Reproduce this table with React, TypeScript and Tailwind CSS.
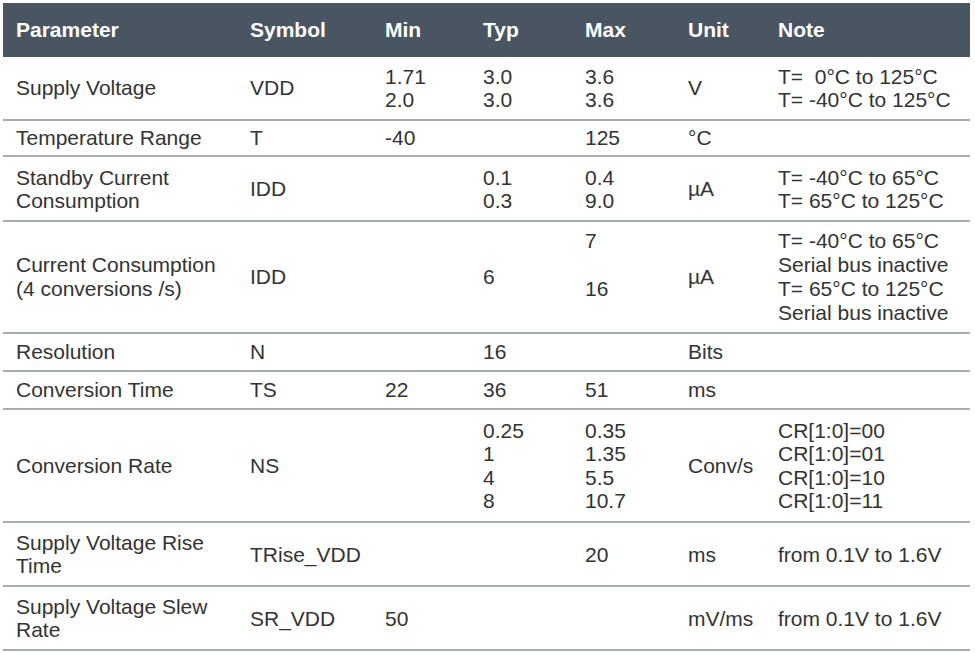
import React from 'react';

type Row = {
    cells: string[][];
    h: string;
    leading: string;
};

const cols = 'grid grid-cols-[234px_135px_98px_102px_103px_90px_205px]';

const headers = ['Parameter', 'Symbol', 'Min', 'Typ', 'Max', 'Unit', 'Note'];

const rows: Row[] = [
    {
        h: 'h-[64px]',
        leading: 'leading-[23px] pb-[1px]',
        cells: [['Supply Voltage'], ['VDD'], ['1.71', '2.0'], ['3.0', '3.0'], ['3.6', '3.6'], ['V'], ['T=  0°C to 125°C', 'T= -40°C to 125°C']],
    },
    {
        h: 'h-[36px]',
        leading: 'leading-[24px]',
        cells: [['Temperature Range'], ['T'], ['-40'], [], ['125'], ['°C'], []],
    },
    {
        h: 'h-[65px]',
        leading: 'leading-[23px]',
        cells: [['Standby Current', 'Consumption'], ['IDD'], [], ['0.1', '0.3'], ['0.4', '9.0'], ['µA'], ['T= -40°C to 65°C', 'T= 65°C to 125°C']],
    },
    {
        h: 'h-[112px]',
        leading: 'leading-[24px]',
        cells: [
            ['Current Consumption', '(4 conversions /s)'],
            ['IDD'],
            [],
            ['6'],
            ['7', '\u00a0', '16', '\u00a0'],
            ['µA'],
            ['T= -40°C to 65°C', 'Serial bus inactive', 'T= 65°C to 125°C', 'Serial bus inactive'],
        ],
    },
    {
        h: 'h-[38px]',
        leading: 'leading-[24px]',
        cells: [['Resolution'], ['N'], [], ['16'], [], ['Bits'], []],
    },
    {
        h: 'h-[38px]',
        leading: 'leading-[24px]',
        cells: [['Conversion Time'], ['TS'], ['22'], ['36'], ['51'], ['ms'], []],
    },
    {
        h: 'h-[113px]',
        leading: 'leading-[23.5px]',
        cells: [
            ['Conversion Rate'],
            ['NS'],
            [],
            ['0.25', '1', '4', '8'],
            ['0.35', '1.35', '5.5', '10.7'],
            ['Conv/s'],
            ['CR[1:0]=00', 'CR[1:0]=01', 'CR[1:0]=10', 'CR[1:0]=11'],
        ],
    },
    {
        h: 'h-[64px]',
        leading: 'leading-[23px]',
        cells: [['Supply Voltage Rise', 'Time'], ['TRise_VDD'], [], [], ['20'], ['ms'], ['from 0.1V to 1.6V']],
    },
    {
        h: 'h-[64px]',
        leading: 'leading-[23px]',
        cells: [['Supply Voltage Slew', 'Rate'], ['SR_VDD'], ['50'], [], [], ['mV/ms'], ['from 0.1V to 1.6V']],
    },
];

export default function App() {
    return (
        <div className="min-h-screen bg-white font-['Liberation_Sans',Arial,sans-serif] text-[21px] text-[#333333]">
            <div className="ml-[3px] pt-[3px] w-[967px]">
                {/* Header */}
                <div className={`${cols} h-[54px] items-center bg-[#4a5562] font-bold text-white`}>
                    {headers.map((h) => (
                        <div key={h} className="pl-[13px]">
                            {h}
                        </div>
                    ))}
                </div>

                {/* Body */}
                {rows.map((row, i) => (
                    <div key={i} className={`${cols} ${row.h} items-center border-b-2 border-[#a9adb1]`}>
                        {row.cells.map((lines, j) => (
                            <div key={j} className={`pl-[13px] whitespace-pre ${row.leading}`}>
                                {lines.map((l, k) => (
                                    <div key={k}>{l}</div>
                                ))}
                            </div>
                        ))}
                    </div>
                ))}
            </div>
        </div>
    );
}
